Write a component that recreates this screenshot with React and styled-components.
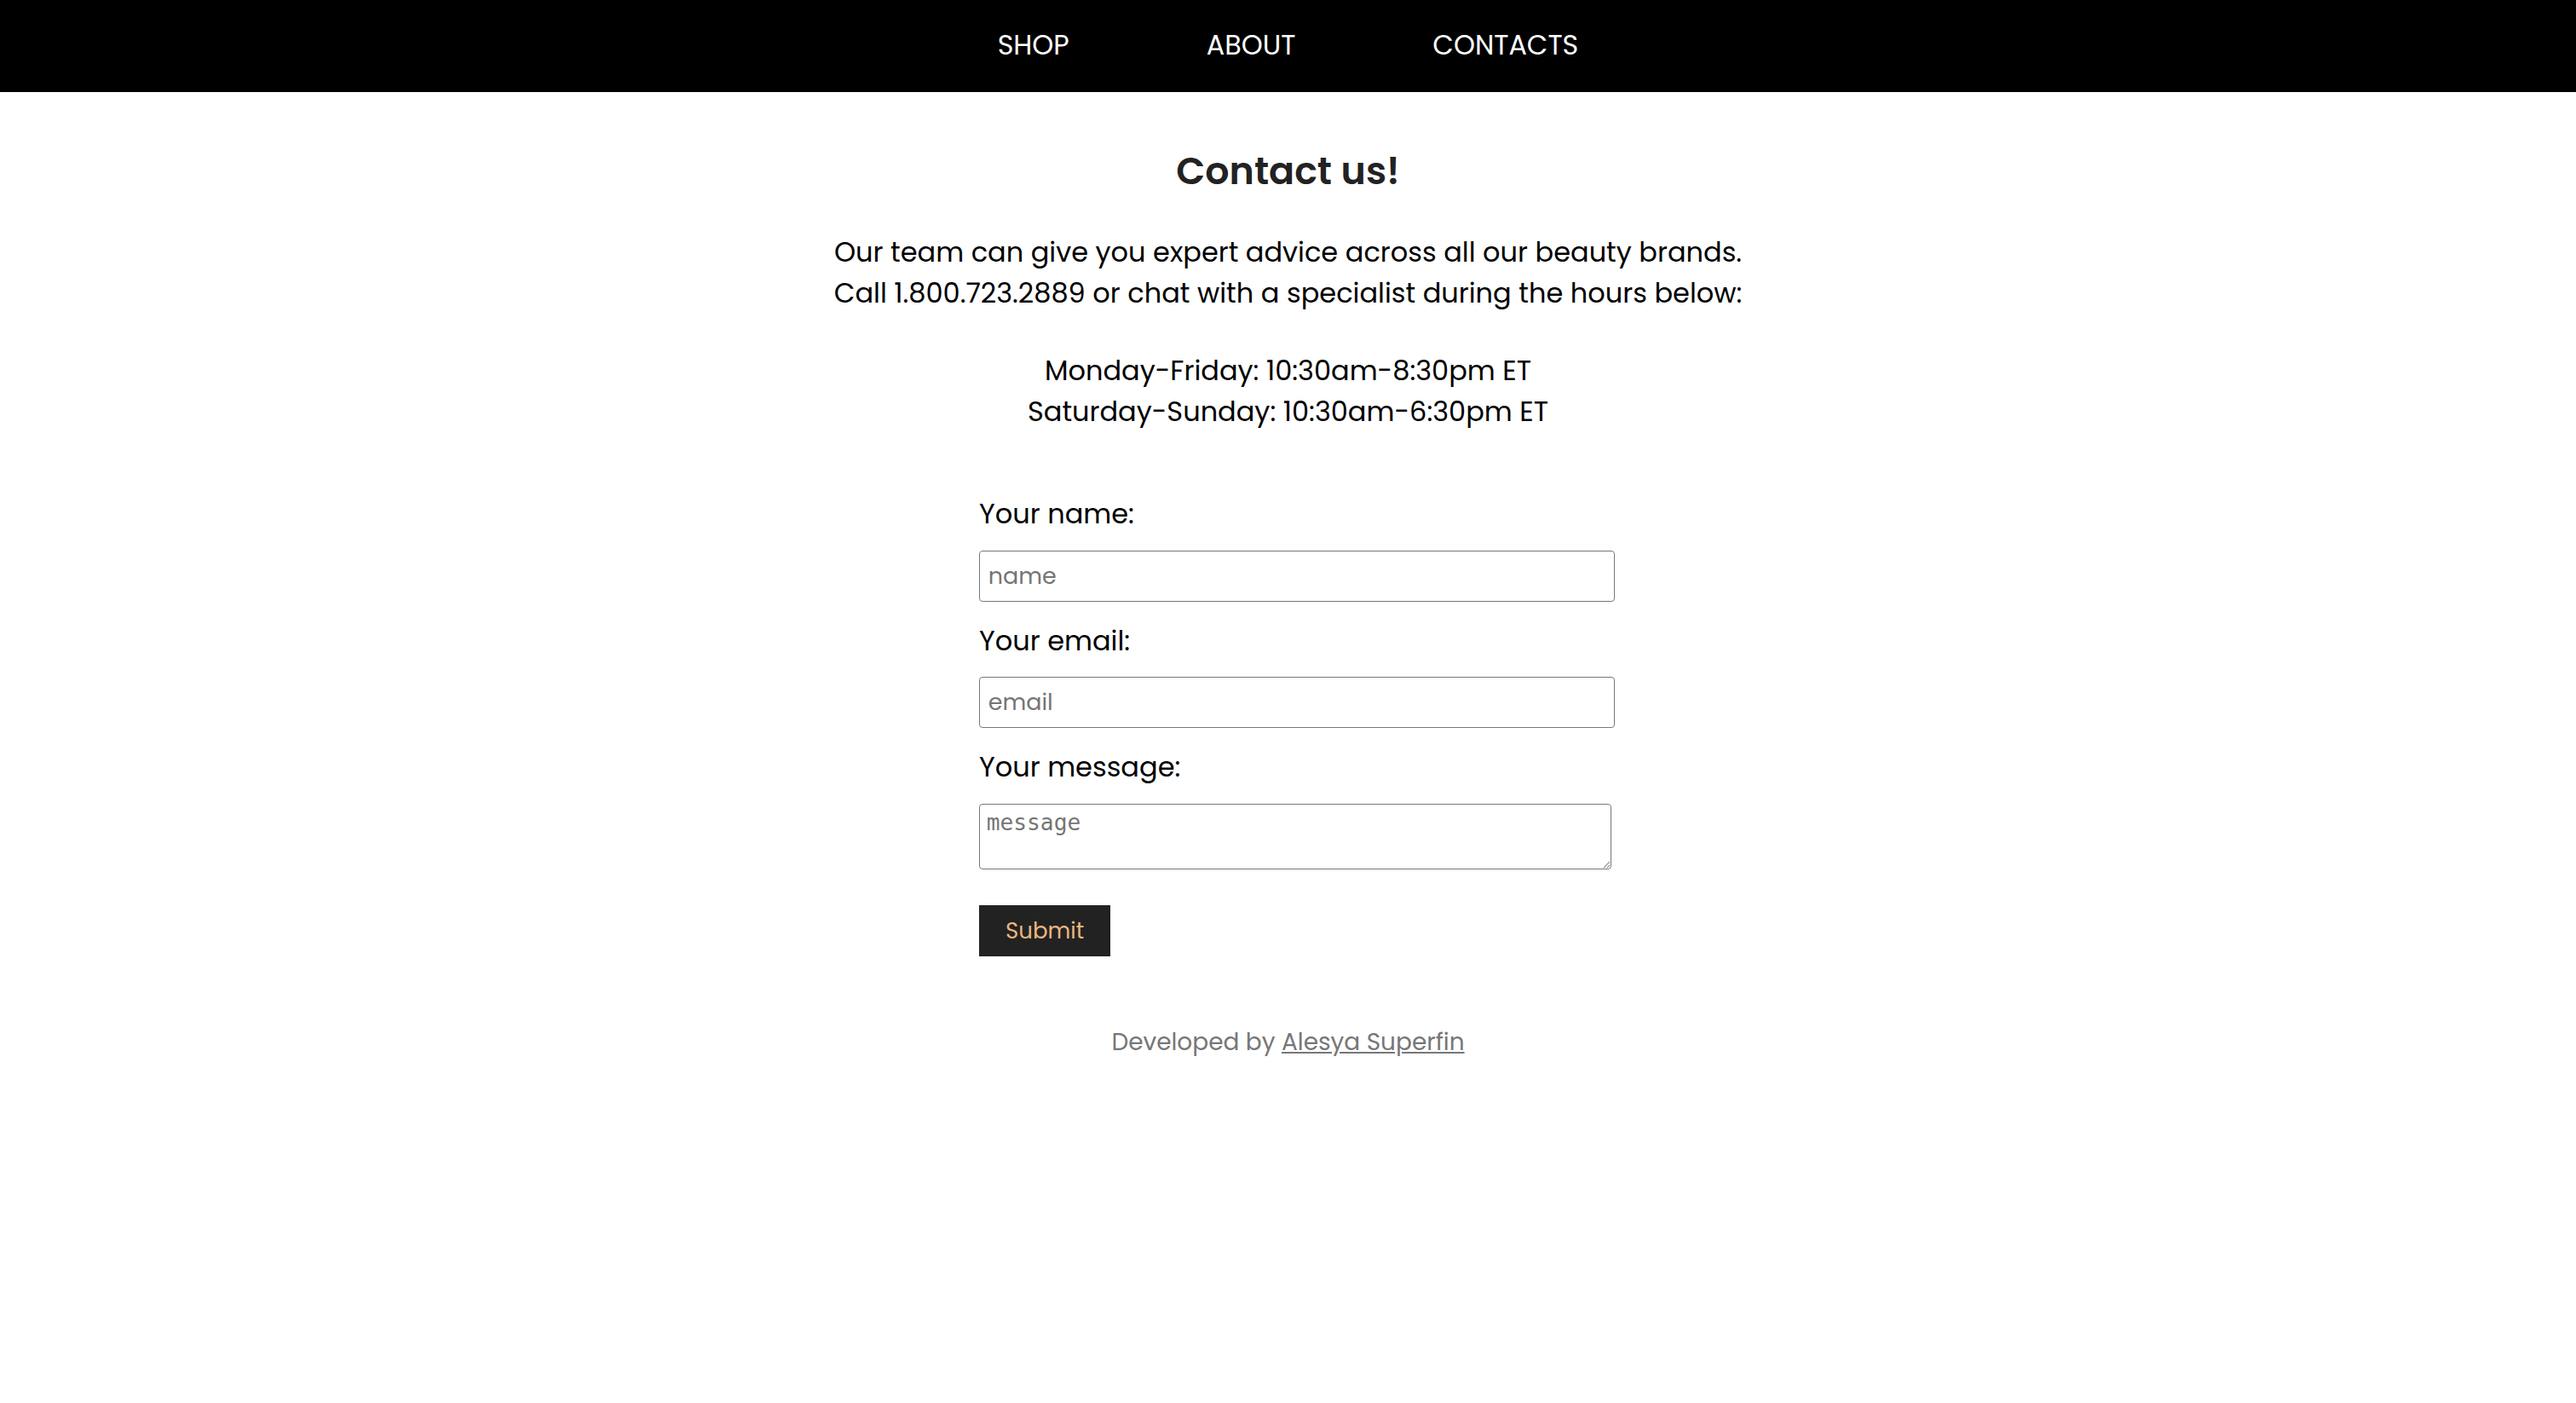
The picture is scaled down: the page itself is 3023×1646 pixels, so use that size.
import styled, { createGlobalStyle } from "styled-components";

// page was captured at ~1.928 device scale, so every css size goes through u()
const S = 1.928;
const u = (n) => `${(n * S).toFixed(2)}px`;

const FONT = `"Poppins", "Open Sans", "Liberation Sans", sans-serif`;

const GlobalStyle = createGlobalStyle`
  body {
    margin: 0;
    background: #fff;
    font-family: ${FONT};
    color: #000;
  }
  * { box-sizing: border-box; }
`;

const Nav = styled.nav`
  height: ${u(56)};
  background: #000;
  display: flex;
  justify-content: center;
  align-items: center;
  gap: ${u(83.5)};
`;

const NavLink = styled.a`
  color: #fff;
  font-size: ${u(16.5)};
  text-transform: uppercase;
  text-decoration: none;
  cursor: pointer;
`;

const Main = styled.main`
  display: flex;
  flex-direction: column;
  align-items: center;
`;

const Title = styled.h1`
  margin: ${u(30)} 0 0;
  font-size: ${u(23)};
  line-height: ${u(36)};
  font-weight: 600;
  color: #222;
`;

const Text = styled.p`
  margin: ${(p) => u(p.$top)} 0 0;
  font-size: ${u(16.6)};
  line-height: ${u(25)};
  text-align: center;
`;

const FormWrap = styled.div`
  width: 100%;
  display: flex;
  justify-content: center;
  padding-left: ${u(11)};
  margin-top: ${u(37.5)};
`;

const Form = styled.form`
  width: ${u(387)};
  display: flex;
  flex-direction: column;
  align-items: flex-start;
`;

const Label = styled.label`
  font-size: ${u(16.6)};
  line-height: ${u(25)};
  margin-bottom: ${u(9.5)};
`;

const Input = styled.input`
  width: ${u(387)};
  height: ${u(31)};
  margin-bottom: ${u(11.5)};
  padding: 0 ${u(5)};
  border: ${u(1)} solid #767676;
  border-radius: ${u(2)};
  font-family: ${FONT};
  font-size: ${u(14)};
  &::placeholder { color: #757575; }
`;

const TextArea = styled.textarea`
  display: block;
  width: ${u(385)};
  height: ${u(40)};
  padding: ${u(3)} ${u(4)};
  border: ${u(1)} solid #767676;
  border-radius: ${u(2)};
  font-family: "DejaVu Sans Mono", monospace;
  font-size: ${u(13.6)};
  resize: both;
  &::placeholder { color: #757575; }
`;

const SubmitButton = styled.button`
  margin-top: ${u(22)};
  width: ${u(80)};
  height: ${u(31)};
  background: #222;
  color: #ebb77f;
  border: none;
  font-family: ${FONT};
  font-size: ${u(13.5)};
  cursor: pointer;
`;

const Footer = styled.footer`
  margin-top: ${u(41.5)};
  font-size: ${u(14.5)};
  line-height: ${u(22)};
  color: #777;
  text-align: center;
  a { color: #777; }
`;

export default function App() {
  return (
    <>
      <GlobalStyle />
      <Nav>
        <NavLink>Shop</NavLink>
        <NavLink>About</NavLink>
        <NavLink>Contacts</NavLink>
      </Nav>
      <Main>
        <Title>Contact us!</Title>
        <Text $top={19}>
          Our team can give you expert advice across all our beauty brands.
          <br />
          Call 1.800.723.2889 or chat with a specialist during the hours below:
        </Text>
        <Text $top={22}>
          Monday-Friday: 10:30am-8:30pm ET
          <br />
          Saturday-Sunday: 10:30am-6:30pm ET
        </Text>
        <FormWrap>
          <Form onSubmit={(e) => e.preventDefault()}>
            <Label htmlFor="name">Your name:</Label>
            <Input id="name" type="text" placeholder="name" />
            <Label htmlFor="email">Your email:</Label>
            <Input id="email" type="email" placeholder="email" />
            <Label htmlFor="message">Your message:</Label>
            <TextArea id="message" placeholder="message" />
            <SubmitButton type="submit">Submit</SubmitButton>
          </Form>
        </FormWrap>
        <Footer>
          Developed by <a href="#">Alesya Superfin</a>
        </Footer>
      </Main>
    </>
  );
}
